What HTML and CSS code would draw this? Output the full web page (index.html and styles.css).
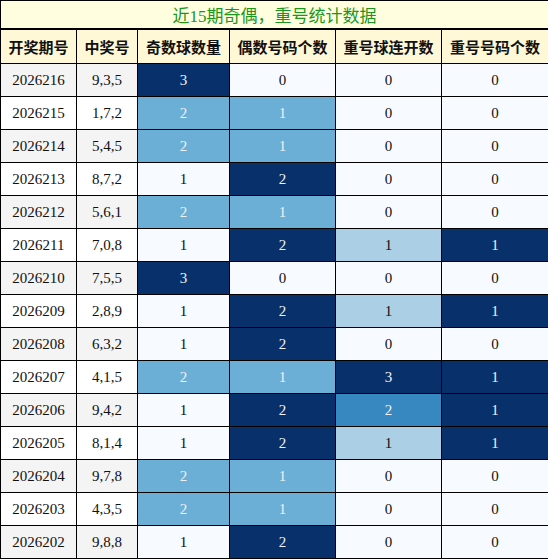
FILE: index.html
```html
<!DOCTYPE html>
<html lang="zh">
<head>
    <meta charset="UTF-8">
    <meta name="viewport" content="width=device-width, initial-scale=1.0">
    <title>近15期奇偶，重号统计数据</title>
    <link rel="stylesheet" href="styles.css">
</head>
<body>
    <table class="stats">
        <colgroup>
            <col class="c-issue">
            <col class="c-nums">
            <col class="c-odd">
            <col class="c-even">
            <col class="c-rep">
            <col class="c-repn">
        </colgroup>
        <thead>
            <tr class="title-row">
                <td colspan="6">近15期奇偶，重号统计数据</td>
            </tr>
            <tr class="head-row">
                <th>开奖期号</th>
                <th>中奖号</th>
                <th>奇数球数量</th>
                <th>偶数号码个数</th>
                <th>重号球连开数</th>
                <th>重号号码个数</th>
            </tr>
        </thead>
        <tbody id="rows"></tbody>
    </table>

    <script>
        const data = [
            ['2026216', '9,3,5', 3, 0, 0, 0],
            ['2026215', '1,7,2', 2, 1, 0, 0],
            ['2026214', '5,4,5', 2, 1, 0, 0],
            ['2026213', '8,7,2', 1, 2, 0, 0],
            ['2026212', '5,6,1', 2, 1, 0, 0],
            ['2026211', '7,0,8', 1, 2, 1, 1],
            ['2026210', '7,5,5', 3, 0, 0, 0],
            ['2026209', '2,8,9', 1, 2, 1, 1],
            ['2026208', '6,3,2', 1, 2, 0, 0],
            ['2026207', '4,1,5', 2, 1, 3, 1],
            ['2026206', '9,4,2', 1, 2, 2, 1],
            ['2026205', '8,1,4', 1, 2, 1, 1],
            ['2026204', '9,7,8', 2, 1, 0, 0],
            ['2026203', '4,3,5', 2, 1, 0, 0],
            ['2026202', '9,8,8', 1, 2, 0, 0]
        ];

        // colour class per column, per value (Blues scale, min..max of the column)
        const shade = [
            {1: 'b0', 2: 'b3', 3: 'b5'},
            {0: 'b0', 1: 'b3', 2: 'b5'},
            {0: 'b0', 1: 'b2', 2: 'b4', 3: 'b5'},
            {0: 'b0', 1: 'b5'}
        ];

        const tbody = document.getElementById('rows');
        data.forEach((row, i) => {
            const tr = document.createElement('tr');
            tr.className = i % 2 === 0 ? 'odd' : 'even';
            let html = `<td class="plain">${row[0]}</td><td class="plain">${row[1]}</td>`;
            for (let c = 0; c < 4; c++) {
                const v = row[c + 2];
                html += `<td class="${shade[c][v]}">${v}</td>`;
            }
            tr.innerHTML = html;
            tbody.appendChild(tr);
        });
    </script>
</body>
</html>
```

FILE: styles.css
```css
* {
    margin: 0;
    padding: 0;
    box-sizing: border-box;
}
body {
    background: #ffffff;
    font-family: "Liberation Serif", "Noto Sans CJK SC", serif;
    color: #111111;
}
.stats {
    width: 548px;
    border-collapse: collapse;
    table-layout: fixed;
    font-size: 15px;
}
.c-issue { width: 76px; }
.c-nums { width: 61px; }
.c-odd { width: 92px; }
.c-even { width: 106px; }
.c-rep { width: 106px; }
.c-repn { width: 107px; }

.stats td,
.stats th {
    border: 1px solid #000000;
    text-align: center;
    vertical-align: middle;
    padding: 0;
}
.title-row td {
    height: 28px;
    background: #ffffe0;
    color: #1a961a;
    font-size: 17px;
    border-bottom: 2px solid #000000;
}
.head-row th {
    height: 35px;
    background: #fff8d6;
    color: #111111;
    font-family: "Noto Sans CJK SC", sans-serif;
    font-size: 15px;
    font-weight: bold;
}
tbody tr {
    height: 33px;
}
.odd .plain { background: #f4f4f4; }
.even .plain { background: #ffffff; }

/* blues scale */
.b0 { background: #f7fbff; color: #111111; }
.b2 { background: #abd0e6; color: #111111; }
.b3 { background: #6baed6; color: #f1f1f1; }
.b4 { background: #3787c0; color: #f1f1f1; }
.b5 { background: #08306b; color: #f1f1f1; }
```
